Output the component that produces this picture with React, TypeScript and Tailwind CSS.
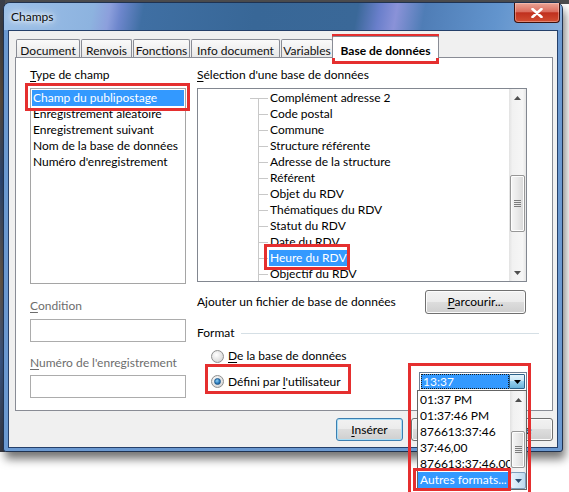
import React from "react";

const Up = () => (
  <svg width="7" height="4" viewBox="0 0 7 4">
    <path d="M0 4 L3.5 0 L7 4Z" fill="#4f4f4f" />
  </svg>
);
const Down = ({ c = "#4f4f4f" }: { c?: string }) => (
  <svg width="7" height="4" viewBox="0 0 7 4">
    <path d="M0 0 L7 0 L3.5 4Z" fill={c} />
  </svg>
);

function Grip() {
  return (
    <div className="flex flex-col gap-[1px]">
      <div className="w-[7px] h-[1px] bg-[#7d7d7d]" />
      <div className="w-[7px] h-[1px] bg-[#7d7d7d]" />
      <div className="w-[7px] h-[1px] bg-[#7d7d7d]" />
      <div className="w-[7px] h-[1px] bg-[#7d7d7d]" />
    </div>
  );
}

const track =
  "bg-[linear-gradient(90deg,#e2e2e2,#f1f1f1_20%,#f6f6f6_80%,#e6e6e6)]";
const thumb =
  "mx-[1px] rounded-[2px] border border-[#979797] bg-[linear-gradient(90deg,#f6f6f6,#e9e9e9_50%,#d8d8d8)] shadow-[inset_0_0_0_1px_#fdfdfd] flex items-center justify-center";

function TreeScroll() {
  return (
    <div className={`w-[17px] h-full flex flex-col ${track}`}>
      <div className="h-[17px] flex items-center justify-center">
        <Up />
      </div>
      <div className="h-[69px]" />
      <div className={`h-[57px] ${thumb}`}>
        <Grip />
      </div>
      <div className="flex-1" />
      <div className="h-[17px] flex items-center justify-center">
        <Down />
      </div>
    </div>
  );
}

function DropScroll() {
  return (
    <div className={`w-[16px] h-full flex flex-col ${track}`}>
      <div className="h-[17px] flex items-center justify-center">
        <Up />
      </div>
      <div className="h-[23px]" />
      <div className={`h-[37px] ${thumb}`}>
        <Grip />
      </div>
      <div className="flex-1" />
      <div className="h-[17px] rounded-[2px] border border-[#7f9db9] bg-[linear-gradient(90deg,#eaf4fb,#d3e8f6_50%,#bcd9ee)] flex items-center justify-center">
        <Down c="#2b4d6e" />
      </div>
    </div>
  );
}

const treeItems = [
  "Complément adresse 2",
  "Code postal",
  "Commune",
  "Structure référente",
  "Adresse de la structure",
  "Référent",
  "Objet du RDV",
  "Thématiques du RDV",
  "Statut du RDV",
  "Date du RDV",
  "Heure du RDV",
  "Objectif du RDV",
];

const typeItems = [
  "Champ du publipostage",
  "Enregistrement aléatoire",
  "Enregistrement suivant",
  "Nom de la base de données",
  "Numéro d'enregistrement",
];

const btn =
  "h-[23px] w-[67px] rounded-[3px] border bg-[linear-gradient(180deg,#f2f2f2_0%,#ebebeb_50%,#dddddd_50%,#cfcfcf_100%)] flex items-center justify-center";

function Radio({ checked }: { checked?: boolean }) {
  return (
    <div className="w-[13px] h-[13px] rounded-full border border-[#8e8f8f] bg-[radial-gradient(circle_at_40%_35%,#ffffff,#e3e3e3_55%,#c9c9c9)] flex items-center justify-center">
      {checked && (
        <div className="w-[7px] h-[7px] rounded-full bg-[radial-gradient(circle_at_40%_35%,#8fd0f5,#2f7fc0_55%,#14467a)] border border-[#1e5a8e]" />
      )}
    </div>
  );
}

function Tab({ w, label }: { w: string; label: string }) {
  return (
    <div
      className={`${w} h-[18px] border border-b-0 border-[#898c95] rounded-t-[2px] bg-[linear-gradient(180deg,#fafafa,#e8e8e8)] flex justify-center pt-[3px] text-[#111]`}
    >
      {label}
    </div>
  );
}

export default function App() {
  return (
    <div className="relative w-[569px] h-[492px] overflow-hidden bg-white [font-family:Lato,'Noto_Sans',sans-serif] text-[12px] leading-[16px] text-black">
      {/* desktop behind */}
      <div className="absolute left-0 top-0 w-[569px] h-[4px] bg-[#4d4d4f]" />
      <div className="absolute left-0 top-0 w-[5px] h-[452px] bg-[linear-gradient(180deg,#3a3f4a_0%,#5e4e3e_22%,#2f4a78_40%,#6a5a48_62%,#3d5a8a_80%,#3b3b44_100%)]" />

      {/* window */}
      <div className="relative ml-[3px] mt-[2px] w-[560px] h-[450px] flex flex-col rounded-t-[7px] rounded-b-[3px] border border-[#1f3250] bg-[#6b99d1] shadow-[2px_7px_10px_rgba(0,0,0,0.55)]">
        {/* title bar */}
        <div className="h-[27px] flex items-start justify-between rounded-t-[6px] bg-[linear-gradient(100deg,#9cc0e8_0%,#8db3df_16%,#8c9fdc_19%,#6d86cc_21%,#3f6fa3_25%,#386797_45%,#3a6898_63%,#6a7fcb_67%,#8a92d8_70%,#4f7db6_75%,#6294cd_88%,#87aedc_100%)]">
          <div className="ml-[6px] mt-[6px] px-[1px] text-[#0b0b0b] [text-shadow:0_0_4px_#fff,0_0_8px_#fff,0_0_12px_#fff]">
            Champs
          </div>
          <div className="mr-[2px] w-[46px] h-[20px] rounded-b-[4px] border border-t-0 border-[#3d100c] bg-[linear-gradient(180deg,#eaa596_0%,#db6e5f_45%,#c0301e_52%,#d24e32_100%)] shadow-[inset_0_0_0_1px_rgba(255,220,210,0.4)] flex items-center justify-center">
            <svg width="12" height="10" viewBox="0 0 12 10">
              <path
                d="M1.5 1 L10.5 9 M10.5 1 L1.5 9"
                stroke="#fff"
                strokeWidth="2.6"
                strokeLinecap="round"
              />
            </svg>
          </div>
        </div>

        {/* client area */}
        <div className="mx-[4px] h-[418px] border border-[#25406a] bg-[#f0f0f0] flex flex-col">
          {/* tabs */}
          <div className="mt-[5px] ml-[7px] h-[21px] flex items-end gap-[1px]">
            <Tab w="w-[64px]" label="Document" />
            <Tab w="w-[51px]" label="Renvois" />
            <Tab w="w-[57px]" label="Fonctions" />
            <Tab w="w-[89px]" label="Info document" />
            <Tab w="w-[52px]" label="Variables" />
            <div className="relative z-10 -ml-[2px] -mb-[1px] w-[107px] h-[22px] border border-b-0 border-[#898c95] rounded-t-[2px] bg-white flex justify-center pt-[6px] font-bold">
              Base de données
            </div>
          </div>

          {/* panel */}
          <div className="ml-[6px] w-[538px] h-[354px] border border-[#898c95] bg-white flex pt-[9px] pl-[14px]">
            {/* left column */}
            <div className="w-[156px] flex flex-col">
              <div className="h-[16px]">
                <span className="underline underline-offset-2">T</span>ype de champ
              </div>
              <div className="mt-[5px] h-[196px] border border-[#a5a5a5] bg-white p-[1px] flex flex-col">
                {typeItems.map((t, i) => (
                  <div
                    key={t}
                    className={
                      i === 0
                        ? "h-[16px] pl-[1px] bg-[#3399ff] text-white whitespace-nowrap"
                        : "h-[16px] pl-[1px] whitespace-nowrap"
                    }
                  >
                    {t}
                  </div>
                ))}
              </div>
              <div className="mt-[14px] h-[16px] text-[#6d6d6d]">
                <span className="underline underline-offset-2">C</span>ondition
              </div>
              <div className="mt-[5px] h-[23px] border border-[#acacac] bg-white" />
              <div className="mt-[13px] h-[16px] text-[#6d6d6d] whitespace-nowrap">
                <span className="underline underline-offset-2">N</span>uméro de l'enregistrement
              </div>
              <div className="mt-[4px] h-[23px] border border-[#acacac] bg-white" />
            </div>

            {/* right column */}
            <div className="ml-[11px] w-[330px] flex flex-col">
              <div className="h-[16px]">
                <span className="underline underline-offset-2">S</span>élection d'une base de données
              </div>
              <div className="mt-[5px] h-[194px] border border-[#828790] bg-white flex overflow-hidden">
                <div className="flex-1 pt-[1px] overflow-hidden">
                  {treeItems.map((t, i) => (
                    <div key={t} className="h-[16px] flex items-stretch">
                      <div className="w-[60px] shrink-0 relative">
                        {i === 0 && (
                          <div className="absolute right-0 top-[8px] w-[8px] h-px bg-[#c8c8c8]" />
                        )}
                      </div>
                      <div className="w-[10px] shrink-0 relative">
                        <div
                          className={
                            i === 0
                              ? "absolute left-0 top-[8px] bottom-0 w-px bg-[#c8c8c8]"
                              : "absolute left-0 top-0 bottom-0 w-px bg-[#c8c8c8]"
                          }
                        />
                        <div className="absolute left-0 top-[8px] w-full h-px bg-[#c8c8c8]" />
                      </div>
                      {t === "Heure du RDV" ? (
                        <span className="ml-[1px] px-[1px] bg-[#3399ff] text-white whitespace-nowrap">
                          {t}
                        </span>
                      ) : (
                        <span className="ml-[2px] whitespace-nowrap">{t}</span>
                      )}
                    </div>
                  ))}
                </div>
                <TreeScroll />
              </div>

              <div className="mt-[8px] h-[24px] flex items-center justify-between">
                <span>Ajouter un fichier de base de données</span>
                <div className="mr-[1px] h-[24px] w-[101px] rounded-[3px] border border-[#707070] bg-[linear-gradient(180deg,#f2f2f2_0%,#ebebeb_50%,#dddddd_50%,#cfcfcf_100%)] shadow-[inset_0_0_0_1px_#fbfbfb] flex items-center justify-center">
                  <span>
                    <span className="underline underline-offset-2">P</span>arcourir...
                  </span>
                </div>
              </div>

              <div className="mt-[11px] h-[16px] flex items-center -mr-[12px]">
                <span>Format</span>
                <div className="ml-[6px] flex-1 h-px bg-[#d5dfe5]" />
              </div>

              <div className="mt-[7px] h-[16px] pl-[14px] flex items-center">
                <Radio />
                <span className="ml-[4px]">
                  <span className="underline underline-offset-2">D</span>e la base de données
                </span>
              </div>

              <div className="mt-[8px] h-[19px] pl-[14px] flex items-center">
                <Radio checked />
                <span className="ml-[4px]">
                  Défini par <span className="underline underline-offset-2">l</span>'utilisateur
                </span>
                <div className="ml-auto w-[108px] h-[19px] border border-[#6f7f92] bg-white flex p-[1px]">
                  <div className="flex-1 bg-[#3399ff] text-white border border-dotted border-[#1b1b1b] leading-[13px] pl-[1px]">
                    13:37
                  </div>
                  <div className="w-[16px] border border-[#2c628b] rounded-[1px] bg-[linear-gradient(180deg,#e5f4fc,#c4e5f6_50%,#98d1ef_50%,#68b3db)] flex items-center justify-center">
                    <Down c="#000" />
                  </div>
                </div>
              </div>
            </div>
          </div>

          {/* buttons */}
          <div className="mt-[7px] ml-[6px] w-[538px] flex justify-end gap-[8px]">
            <div className={`${btn} border-[#3c7fb1] shadow-[inset_0_0_0_1px_#a9def6]`}>
              <span>
                <span className="underline underline-offset-2">I</span>nsérer
              </span>
            </div>
            <div className={`${btn} border-[#707070] shadow-[inset_0_0_0_1px_#fbfbfb]`} />
            <div className={`${btn} border-[#707070] shadow-[inset_0_0_0_1px_#fbfbfb]`}>Aide</div>
          </div>
        </div>
      </div>

      {/* open dropdown list */}
      <div className="absolute left-[417px] top-[390px] w-[110px] h-[100px] border border-[#646464] bg-white flex">
        <div className="flex-1 pt-[1px] flex flex-col overflow-hidden">
          <div className="h-[16px] pl-[2px]">01:37 PM</div>
          <div className="h-[16px] pl-[2px]">01:37:46 PM</div>
          <div className="h-[16px] pl-[2px]">876613:37:46</div>
          <div className="h-[16px] pl-[2px]">37:46,00</div>
          <div className="h-[16px] pl-[2px] whitespace-nowrap">876613:37:46.00</div>
          <div className="h-[17px] pl-[2px] bg-[#3399ff] text-white whitespace-nowrap">
            Autres formats...
          </div>
        </div>
        <DropScroll />
      </div>

      {/* red annotation boxes */}
      <div className="absolute left-[332px] top-[34px] w-[107px] h-[30px] border-[3px] border-[#e52f2f]" />
      <div className="absolute left-[25px] top-[83px] w-[165px] h-[28px] border-[3px] border-[#e52f2f]" />
      <div className="absolute left-[264px] top-[244px] w-[86px] h-[26px] border-[3px] border-[#e52f2f]" />
      <div className="absolute left-[205px] top-[364px] w-[146px] h-[30px] border-[3px] border-[#e52f2f]" />
      <div className="absolute left-[408px] top-[363px] w-[123px] h-[135px] border-[3px] border-[#e52f2f]" />
      <div className="absolute left-[413px] top-[468px] w-[98px] h-[23px] border-[3px] border-[#e52f2f]" />
    </div>
  );
}
